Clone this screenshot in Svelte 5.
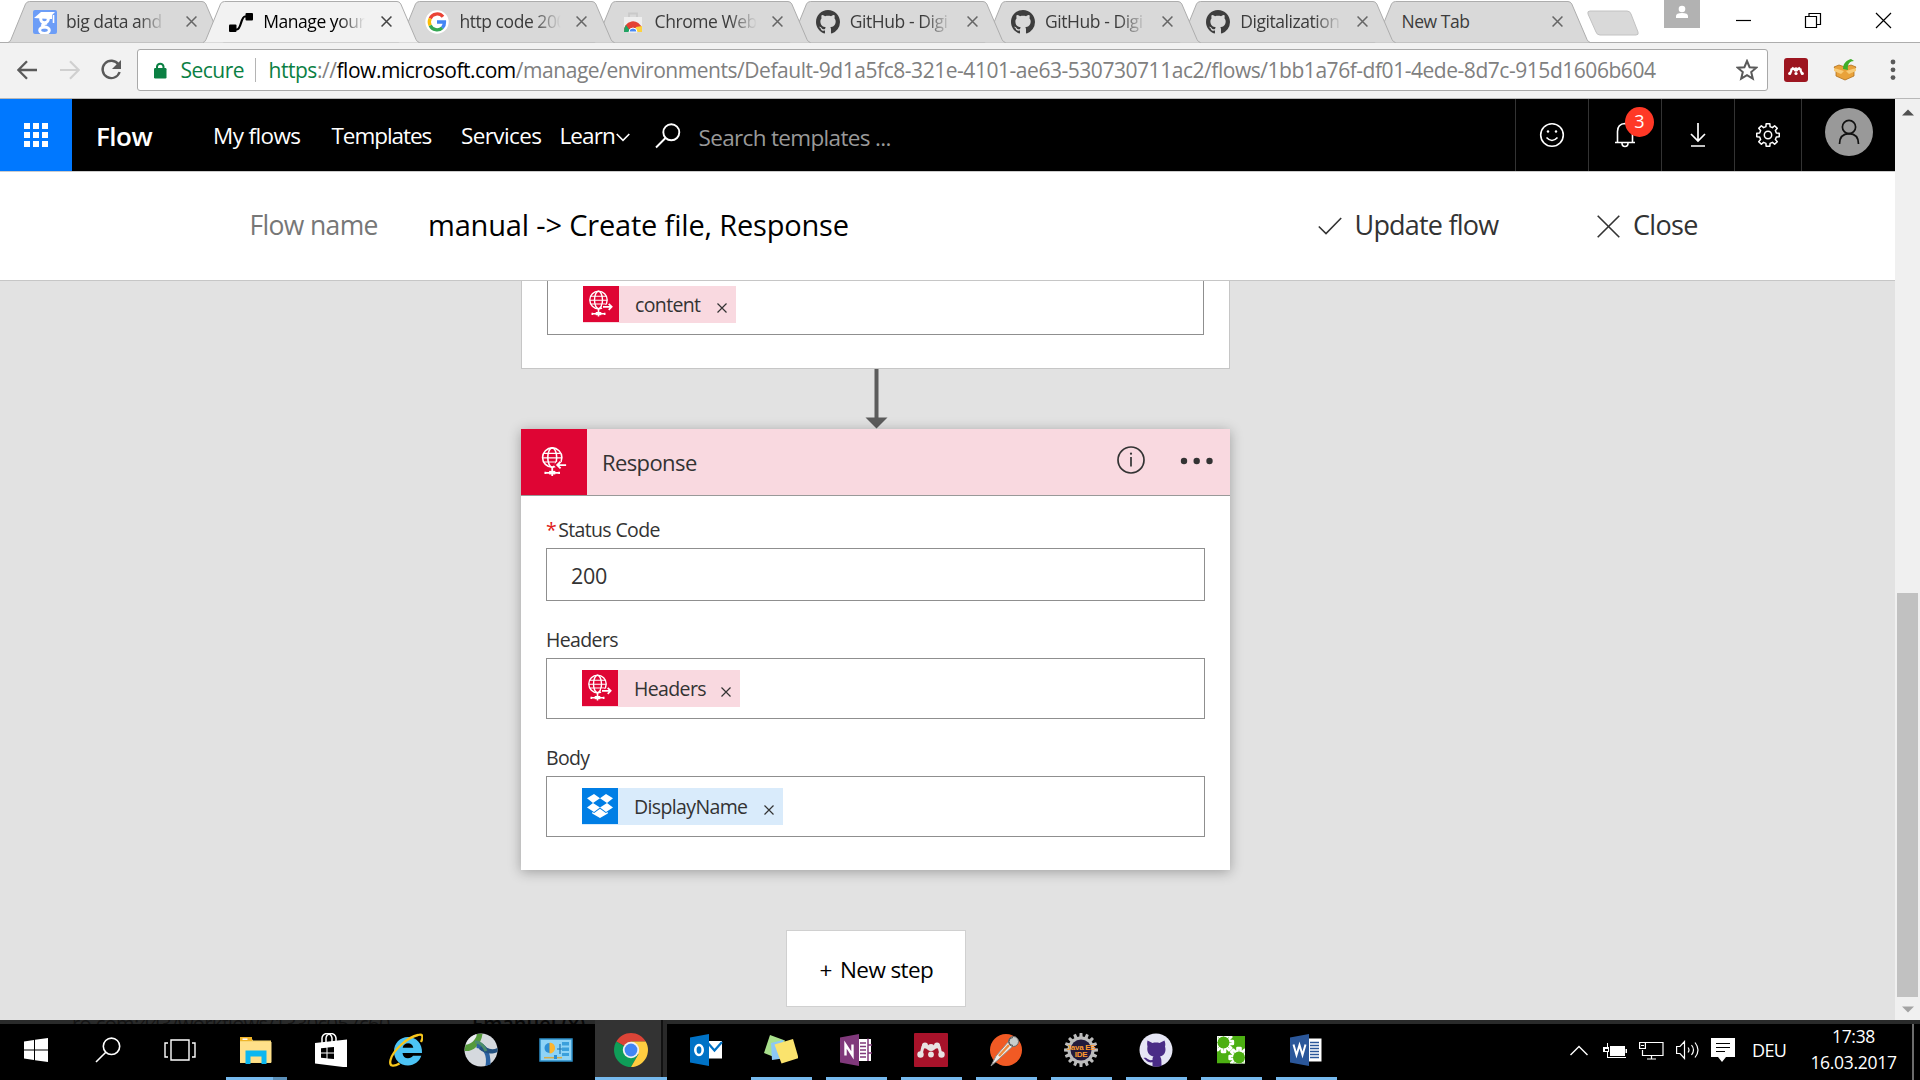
<script>
  const tabs = [
    { title: 'big data and', icon: 'scholar', w: 101 },
    { title: 'Manage your', icon: 'flow', w: 103, active: true },
    { title: 'http code 200', icon: 'google', w: 103 },
    { title: 'Chrome Web', icon: 'store', w: 103 },
    { title: 'GitHub - Digi', icon: 'github', w: 103 },
    { title: 'GitHub - Digi', icon: 'github', w: 103 },
    { title: 'Digitalization', icon: 'github', w: 103 },
    { title: 'New Tab', icon: '', w: 137 }
  ];
  const apps = ['explorer', 'winstore', 'ie', 'globe', 'panel', 'chrome', 'outlook', 'sticky', 'onenote', 'mendeley', 'postman', 'javaee', 'githubdesk', 'gears', 'word'];
  const running = ['sticky', 'onenote', 'mendeley', 'postman', 'javaee', 'githubdesk', 'gears', 'word'];
  const octo = 'M8 0C3.58 0 0 3.58 0 8c0 3.54 2.29 6.53 5.47 7.59.4.07.55-.17.55-.38 0-.19-.01-.82-.01-1.49-2.01.37-2.53-.49-2.69-.94-.09-.23-.48-.94-.82-1.13-.28-.15-.68-.52-.01-.53.63-.01 1.08.58 1.23.82.72 1.21 1.87.87 2.33.66.07-.52.28-.87.51-1.07-1.78-.2-3.64-.89-3.64-3.95 0-.87.31-1.59.82-2.15-.08-.2-.36-1.02.08-2.12 0 0 .67-.21 2.2.82.64-.18 1.32-.27 2-.27s1.36.09 2 .27c1.53-1.04 2.2-.82 2.2-.82.44 1.1.16 1.92.08 2.12.51.56.82 1.27.82 2.15 0 3.07-1.87 3.75-3.65 3.95.29.25.54.73.54 1.48 0 1.07-.01 1.93-.01 2.2 0 .21.15.46.55.38A8.01 8.01 0 0 0 16 8c0-4.42-3.58-8-8-8z';
  const gearTeeth = (n, cx, cy, r1, r2) => {
    let d = '';
    for (let i = 0; i < n; i++) {
      const a = (i / n) * Math.PI * 2 - Math.PI / 2;
      const s = Math.PI / n;
      [[-0.62, r1], [-0.42, r2], [0.42, r2], [0.62, r1]].forEach(([k, r], j) => {
        const x = cx + Math.cos(a + s * k) * r;
        const y = cy + Math.sin(a + s * k) * r;
        d += (i + j === 0 ? 'M' : 'L') + x.toFixed(2) + ' ' + y.toFixed(2);
      });
    }
    return d + 'Z';
  };
</script>

{#snippet globeIcon(size, dir)}
  <svg width={size} height={size} viewBox="0 0 36 36" fill="none" stroke="#fff" stroke-width="1.4">
    <circle cx="15.5" cy="14" r="8.7" />
    <ellipse cx="15.5" cy="14" rx="4" ry="8.7" />
    <path d="M8 10.3h15M7 14.3h17M8.2 18h14" stroke-width="1.1" />
    {#if dir === 'right'}
      <path d="M19 20.8h9.5M25.5 17.5l3.5 3.3-3.5 3.3" stroke="#df0534" stroke-width="4" />
      <path d="M20 20.8h8.5M25.7 17.8l3 3-3 3" stroke-width="1.7" />
    {:else}
      <path d="M28.5 20.8H19M23 17.5l-3.5 3.3 3.5 3.3" stroke="#df0534" stroke-width="4" />
      <path d="M28 20.8H20M23 17.8l-3 3 3 3" stroke-width="1.7" />
    {/if}
    <path d="M15.5 22.5v8M9.5 27.7h12" stroke-width="1.6" />
    <rect x="12.7" y="26" width="5.6" height="3.2" fill="#fff" stroke="none" />
    <path d="M9.3 26.7v2.2M21.7 26.7v2.2" stroke-width="1.6" />
  </svg>
{/snippet}

{#snippet chromeBall()}
  <path d="M17 17 2.3 8.5A17 17 0 0 1 31.7 8.5H17z" fill="#db4437" />
  <path d="M2.3 8.5A17 17 0 0 0 17 34l7.4-12.7L17 17z" fill="#0f9d58" />
  <path d="M31.7 8.5A17 17 0 0 1 17 34l7.4-12.7L17 8.5z" fill="#ffcd40" />
  <circle cx="17" cy="17" r="8.2" fill="#f1f1f1" />
  <circle cx="17" cy="17" r="6.4" fill="#4285f4" />
{/snippet}

{#snippet favicon(name)}
  <svg width="24" height="24" viewBox="0 0 24 24">
    {#if name === 'scholar'}
      <rect width="24" height="24" rx="2" fill="#6c9df7" />
      <path d="M1 8 8 2h14l-3 3v4h-3" fill="#fff" />
      <g fill="none" stroke="#fff" stroke-width="3">
        <circle cx="11.5" cy="9" r="3.8" />
        <path d="M14 13c-5 1-6 3-2 4" />
        <ellipse cx="11.5" cy="20.3" rx="4.8" ry="3.2" />
      </g>
      <path d="M20.5 5v8" stroke="#fff" stroke-width="1.6" />
    {:else if name === 'flow'}
      <path d="M4 19.500h4c4 0 4-13 8-13h4" fill="none" stroke="#000" stroke-width="2.2" />
      <rect x="0" y="14.500" width="7.500" height="7.500" rx="1" />
      <rect x="16.500" y="3" width="7.500" height="7.500" rx="1" />
    {:else if name === 'google'}
      <circle cx="12" cy="12" r="11.700" fill="#fff" />
      <g fill="none" stroke-width="3.300">
        <path d="M18 6.700A7.600 7.600 0 0 0 5.200 8.500" stroke="#ea4335" />
        <path d="M5.200 8.500a7.600 7.600 0 0 0 0 7" stroke="#fbbc05" />
        <path d="M5.200 15.500A7.600 7.600 0 0 0 17.300 17.800" stroke="#34a853" />
        <path d="M17.300 17.800A7.600 7.600 0 0 0 19.500 12H12" stroke="#4285f4" />
      </g>
    {:else if name === 'store'}
      <path d="M3 7h18v15H3z" fill="#eee" />
      <path d="M8 7V3.500h8V7" fill="none" stroke="#c9c9c9" stroke-width="1.800" />
      <path d="M3 22a9 9 0 0 1 18-3l-9-1z" fill="#e34133" />
      <path d="M3 22a9 9 0 0 1 2-7l5 7z" fill="#1fa463" />
      <path d="M21 16v6h-8l2-5z" fill="#fdd23e" />
      <path d="M8 22a4 4 0 0 1 8 0z" fill="#4a8af4" stroke="#fff" />
    {:else if name === 'github'}
      <path d={octo} transform="scale(1.5)" fill="#3d3d3d" />
    {/if}
  </svg>
{/snippet}

{#snippet cross(s, c, w)}
  <svg width={s} height={s} viewBox="0 0 10 10"><path d="M.5.5l9 9M9.500.5l-9 9" stroke={c} stroke-width={w} /></svg>
{/snippet}

{#snippet appIcon(name)}
  <svg width="34" height="34" viewBox="0 0 34 34">
    {#if name === 'explorer'}
      <path d="M1 4.500h11l2 3h18v22.500H1z" fill="#f8d775" />
      <path d="M1 4h12v4H1z" fill="#f0b429" />
      <path d="M3.500 6.200h5" stroke="#fff" stroke-width="1.500" />
      <path d="M1 9h31.500v20.500H1z" fill="#ffe08a" />
      <path d="M6.500 17.500h21V31h-5v-7.500H11.500V31h-5z" fill="#0cb7f0" />
    {:else if name === 'winstore'}
      <path d="M8 10V6a5 5 0 0 1 10-1v5M12 10V6a5 5 0 0 1 10-1v5" fill="none" stroke="#fff" stroke-width="1.500" />
      <path d="M1 10 33 6.500V34.500L1 30.500z" fill="#fff" />
      <path d="M7 15.200l5.500-.5v4.800H7zM13.500 14.600l6.500-.6v5.500h-6.500zM7 20.500h5.500v4.800L7 24.800zM13.500 20.500H20V26l-6.500-.6z" fill="#000" />
    {:else if name === 'ie'}
      <path fill-rule="evenodd" d="M33 20H13.500c.3 3.300 2.400 5.300 5.500 5.300 2.200 0 4-.9 5-2.500h8.300c-1.800 5.600-7 9.700-13.300 9.700C10.800 32.500 5 26.500 5 18.500S10.800 4 19 4s14.500 6.500 14 16zM13.700 14.800h10.600c-.5-2.800-2.500-4.500-5.200-4.500-2.800 0-4.900 1.700-5.400 4.500z" fill="#4cc3f5" />
      <path d="M32 9c2.500-5 2-8.500-3-7C19 4 4 17 1.500 27c-1.500 6.500 3 7 9 3.500" fill="none" stroke="#f7c61c" stroke-width="2.300" />
    {:else if name === 'globe'}
      <circle cx="17" cy="17" r="16.500" fill="#d5d9de" />
      <path d="M2 11A16.500 16.500 0 0 1 12 1.300C14 5 9 11 2 11z" fill="#e9ecef" />
      <path d="M.6 18C8 19 17 13 18.500.7L13 1C12 7 7 11 1.500 12z" fill="#559a3b" />
      <path d="M13 10c8-1 14 7 13.500 21.500l-5 1.500c2-11-2-17-9-18z" fill="#2b62a0" />
      <path d="M15 16c5 4.500 12 6 18.400 3l.1-4C27 18 22 15 19 11z" fill="#23517f" />
      <path d="M11 9c6 0 9 4 11 9" fill="none" stroke="#4b8d6a" stroke-width="3" />
    {:else if name === 'panel'}
      <rect x="1" y="6" width="32" height="22" fill="#8fd4f7" stroke="#2d8fc9" stroke-width="1.500" />
      <circle cx="10.500" cy="15" r="5" fill="#2d8fd5" />
      <path d="M10.500 15V9.500a5.500 5.500 0 0 1 0 11z" fill="#ffb52e" />
      <path d="M18 16h5M21 11v10" stroke="#1f77b5" stroke-width="1.200" fill="none" />
      <path d="M23 9h7v3.500h-7zM23 14.500h7V18h-7zM23 20h7v3h-7z" fill="#3ba0dc" />
      <path d="M5 24.700h18" stroke="#d6ac4b" stroke-width="1.500" />
      <path d="M15 22h3v4h-3z" fill="#2d8fd5" />
    {:else if name === 'chrome'}
      {@render chromeBall()}
    {:else if name === 'outlook'}
      <path d="M16 8h17v17.500H16z" fill="#fff" />
      <path d="M18 9l7.500 8.500L33 9" fill="none" stroke="#0072c6" stroke-width="2.200" />
      <path d="M1 4.500 20 1v32L1 29.500z" fill="#0072c6" />
      <ellipse cx="10" cy="17" rx="3.700" ry="5" fill="none" stroke="#fff" stroke-width="2.600" />
    {:else if name === 'sticky'}
      <path d="M6 2 21 7.500 15 26 0 20z" fill="#a9e08c" />
      <path d="M7 10 19 7l3 18-14 2z" fill="#8cc8f5" />
      <path d="M10.500 11.500 29 6l5.500 19-17 5.500z" fill="#fbe36d" />
    {:else if name === 'onenote'}
      <path d="M18 6h14v22H18z" fill="#fff" />
      <path d="M21 10h6M21 13.500h6M21 17h6M21 20.500h6M21 24h6" stroke="#80397b" stroke-width="1.300" />
      <path d="M29 5.500V28M29 12h4M29 20h4" stroke="#80397b" stroke-width="1.500" />
      <path d="M1 4.500 20 1v32L1 29.500z" fill="#80397b" />
      <path d="M6.500 22.500v-11l7 11v-11" fill="none" stroke="#fff" stroke-width="2.400" />
    {:else if name === 'mendeley'}
      <rect width="34" height="34" rx="1" fill="#a8122a" />
      <path d="M6.500 21c2.500-2 1-9 4.500-9.500M27.500 21c-2.500-2-1-9-4.500-9.500M11 12q6 8 12 0" fill="none" stroke="#e8e2e2" stroke-width="3" />
      <g fill="#e8e2e2"><circle cx="11" cy="12.500" r="3" /><circle cx="23" cy="12.500" r="3" /><circle cx="17" cy="14.500" r="3.600" /><circle cx="6.500" cy="21.500" r="3.200" /><circle cx="17" cy="21.500" r="2.900" /><circle cx="27.500" cy="21.500" r="3.200" /></g>
    {:else if name === 'postman'}
      <circle cx="17" cy="17" r="16" fill="#f15a24" />
      <path d="M25 12 10 26l-8 7 5-10L20 8z" fill="#f3ede8" stroke="#8d8d8d" />
      <path d="M20 12 10 23" stroke="#f08a3c" stroke-width="2.500" />
      <circle cx="24.500" cy="8.500" r="5" fill="#c8cccb" stroke="#666" />
      <path d="M24 4.500a4 4 0 0 0 0 8" fill="none" stroke="#555" />
    {:else if name === 'javaee'}
      <path d={gearTeeth(16, 17, 17, 13.5, 17)} fill="#bcbcbc" />
      <circle cx="17" cy="17" r="10.500" fill="#231a3c" />
      <text x="17" y="16.500" text-anchor="middle" class="java">Java EE</text>
      <text x="17" y="24" text-anchor="middle" class="java">IDE</text>
    {:else if name === 'githubdesk'}
      <circle cx="17" cy="17" r="16.500" fill="#e6e6f5" />
      <path d="M8.500 7.500l5 2.500c2-.6 5-.6 7 0l5-2.500c1 3 1 4 .5 6 1.500 5-.5 9-5 10 1.500 2 1.500 3 1.500 9.500-3 1-7 1-9 .3v-4c-5 .7-6-2-9-4.300 4-1 4 3 9 2 0-2 0-2.500 1-3.500-5-1-7-5-6-10-.5-2-.5-3.500 0-6z" fill="#4a2c87" />
    {:else if name === 'gears'}
      <clipPath id="gearbox"><rect x="3" y="3" width="28" height="27.500" /></clipPath>
      <g clip-path="url(#gearbox)" fill="#4caf12" stroke="#fff" stroke-width="2.600" stroke-linejoin="round">
        <rect x="3" y="3" width="28" height="27.500" stroke="none" />
        <path d={gearTeeth(8, 9.5, 9.5, 6, 9.5)} />
        <path d={gearTeeth(8, 25, 24.5, 6, 9.5)} />
        <circle cx="9.500" cy="9.500" r="6" stroke="none" /><circle cx="25" cy="24.500" r="6" stroke="none" />
      </g>
    {:else if name === 'word'}
      <path d="M18 5.500h14.500v23H18z" fill="#fff" />
      <path d="M21 9.500h9M21 12.500h9M21 15.500h9M21 18.500h9M21 21.500h9M21 24.500h9" stroke="#2b579a" stroke-width="1.300" />
      <path d="M1 4.500 20 1v32L1 29.500z" fill="#2b579a" />
      <path d="M4.500 11.500l3 10.500 3-10 3 10 3-10.500" fill="none" stroke="#fff" stroke-width="2" />
    {/if}
  </svg>
{/snippet}

<div class="screen">
  <div class="tabstrip">
    <div class="tabs">
      {#each tabs as t, i}
        <div class="tab z{i}" class:active={t.active}>
          <svg class="shape" width="217" height="43" viewBox="0 0 217 43">
            <path d="M0 42.500 Q2 42 3 39.500L17.500 4Q18.800 1.500 21.500 1.500H194Q196.500 1.500 197.800 4L213 39.500Q214 42 216.500 42.500" fill={t.active ? '#f2f2f2' : '#d9d9d9'} stroke="#adadad" />
          </svg>
          <div class="tabbody" class:plain={!t.icon}>
            {#if t.icon}<span class="fav">{@render favicon(t.icon)}</span>{/if}
            <span class="title" class:fade={t.icon} style:width="{t.w}px">{t.title}</span>
            <span class="tx">{@render cross(11, t.active ? '#444' : '#666', 1.4)}</span>
          </div>
        </div>
      {/each}
    </div>
    <svg class="newtab" width="54" height="27" viewBox="0 0 54 27"><path d="M4 1h37q3 0 4 3l7 18q1 3-2 3H14q-3 0-4-3L2 4Q1 1 4 1z" fill="#d9d9d9" stroke="#c2c2c2" /></svg>
    <div class="profile"><svg width="36" height="28" viewBox="0 0 36 28"><circle cx="18" cy="9" r="3.300" fill="#fff" /><path d="M12 18v-2q0-3 6-3t6 3v2z" fill="#fff" /></svg></div>
    <svg class="winctl" width="160" height="20" viewBox="0 0 160 20" fill="none" stroke="#000" stroke-width="1.200">
      <path d="M0 10.500h15" />
      <path d="M69.500 6.500h11v11h-11zM73 6.500V3.500h11.500v11H81" />
      <path d="M140 3l15 15M155 3l-15 15" />
    </svg>
  </div>

  <div class="toolbar">
    <svg width="21" height="20" viewBox="0 0 21 20" class="back"><path d="M20 10H1.500M10 1.300 1.300 10l8.700 8.700" fill="none" stroke="#5a5a5a" stroke-width="2.300" /></svg>
    <svg width="20" height="20" viewBox="0 0 20 20" class="fwd"><path d="M0 10h18.500M10 1.300l8.700 8.700-8.700 8.700" fill="none" stroke="#d0d0d0" stroke-width="2.200" /></svg>
    <svg width="22" height="22" viewBox="0 0 22 22" class="reload"><path d="M18.500 5.500A8.700 8.700 0 1 0 19.600 13" fill="none" stroke="#5a5a5a" stroke-width="2.400" /><path d="M21 1v9h-9z" fill="#5a5a5a" /></svg>
    <div class="omni">
      <svg width="13" height="17" viewBox="0 0 13 17" class="lock"><rect x="0" y="6" width="12.500" height="10.500" rx="1.200" fill="#0b8043" /><path d="M3 7V4.500a3.300 3.300 0 0 1 6.500 0V7" fill="none" stroke="#0b8043" stroke-width="2" /></svg>
      <span class="secure">Secure</span>
      <span class="bar"></span>
      <span class="url"><span class="g">https</span>://<span class="k">flow.microsoft.com</span>/manage/environments/Default-9d1a5fc8-321e-4101-ae63-530730711ac2/flows/1bb1a76f-df01-4ede-8d7c-915d1606b604</span>
      <svg width="22" height="22" viewBox="0 0 22 22" class="star"><path d="M11 2l2.600 6.200 6.700.5-5.100 4.400 1.600 6.500L11 16.100l-5.800 3.500 1.600-6.500L1.700 8.700l6.700-.5z" fill="none" stroke="#5a5a5a" stroke-width="2" /></svg>
    </div>
    <svg width="24" height="24" viewBox="0 0 24 24" class="ext1"><rect width="24" height="24" rx="3" fill="#9d1620" /><path d="M5.500 15.500q2-1 2-5M18.500 15.500q-2-1-2-5M8 9.500q4 5 8 0" fill="none" stroke="#fff" stroke-width="2.200" /><circle cx="12" cy="11.500" r="2.200" fill="#fff" /><circle cx="12" cy="15.500" r="1.600" fill="#fff" /><circle cx="5.700" cy="15.500" r="1.600" fill="#fff" /><circle cx="18.300" cy="15.500" r="1.600" fill="#fff" /></svg>
    <svg width="24" height="22" viewBox="0 0 24 22" class="ext2"><path d="M1 8l5-2 6 2 6-2 5 2-2 3v6l-9 4-9-4v-6z" fill="#e9a23b" stroke="#b06f1c" stroke-width=".8" /><path d="M1 9l10 3-3 3-7-3zM23 9l-10 3 3 3 7-3z" fill="#f8cb77" /><path d="M10 10c0-6 4-9 8-10l3 2c-4 0-7 3-6 9z" fill="#3fae2a" /></svg>
    <svg width="6" height="22" viewBox="0 0 6 22"><circle cx="3" cy="3" r="2.400" fill="#5a5a5a" /><circle cx="3" cy="10.800" r="2.400" fill="#5a5a5a" /><circle cx="3" cy="18.600" r="2.400" fill="#5a5a5a" /></svg>
  </div>

  <div class="view">
    <div class="page">
      <header>
        <div class="waffle"><svg width="24" height="24" viewBox="0 0 24 24" fill="#fff">{#each [0, 9, 18] as y}{#each [0, 9, 18] as x}<rect {x} {y} width="6" height="6" />{/each}{/each}</svg></div>
        <span class="brand">Flow</span>
        <span class="nav n1">My flows</span>
        <span class="nav n2">Templates</span>
        <span class="nav n3">Services</span>
        <span class="nav n4">Learn</span>
        <svg class="chev" width="14" height="9" viewBox="0 0 14 9"><path d="M.7 1l6.300 6.300L13.300 1" fill="none" stroke="#fff" stroke-width="1.600" /></svg>
        <svg class="find" width="26" height="26" viewBox="0 0 26 26" fill="none" stroke="#fff" stroke-width="1.900"><circle cx="16.300" cy="9.300" r="8" /><path d="M10.500 15 1 24.500" /></svg>
        <span class="search">Search templates ...</span>
        <div class="hic w73"><svg width="26" height="26" viewBox="0 0 26 26" fill="none" stroke="#fff" stroke-width="1.600"><circle cx="13" cy="13" r="11.300" /><path d="M7.500 15.500q5.500 6 11 0" /><circle cx="9" cy="9.500" r="1.200" fill="#fff" stroke="none" /><circle cx="17" cy="9.500" r="1.200" fill="#fff" stroke="none" /></svg></div>
        <div class="hic w73 bell"><svg width="22" height="26" viewBox="0 0 22 26" fill="none" stroke="#fff" stroke-width="1.600"><path d="M1 20.500h20M3.500 20.500V9.500q0-7.500 7.500-8 7.500.5 7.500 8v11" /><path d="M8 21q0 3.500 3 3.500t3-3.500" /></svg><span class="badge">3</span></div>
        <div class="hic w73"><svg width="18" height="26" viewBox="0 0 18 26" fill="none" stroke="#fff" stroke-width="1.700"><path d="M9 1v18M2 12l7 7 7-7M2 24h14" /></svg></div>
        <div class="hic w67"><svg width="26" height="26" viewBox="0 0 26 26" fill="none" stroke="#fff" stroke-width="1.500" stroke-linejoin="round"><path d={gearTeeth(8, 13, 13, 8.6, 11.4)} /><circle cx="13" cy="13" r="3.700" /></svg></div>
        <div class="hic av"><svg width="48" height="48" viewBox="0 0 48 48" fill="none" stroke="#111" stroke-width="1.700"><circle cx="24" cy="24" r="24" fill="#999" stroke="none" /><circle cx="24" cy="19" r="6.600" /><path d="M14.500 36q0-10 9.500-10.300 9.500.3 9.500 10.300" /></svg></div>
      </header>

      <div class="namebar">
        <span class="lbl">Flow name</span>
        <span class="fname">manual -&gt; Create file, Response</span>
        <svg class="check" width="24" height="18" viewBox="0 0 24 18"><path d="M.8 9.500l7.200 7L23.200 1" fill="none" stroke="#333" stroke-width="1.600" /></svg>
        <span class="upd">Update flow</span>
        <svg class="bigx" width="23" height="23" viewBox="0 0 23 23"><path d="M.7.7l21.600 21.600M22.300.7.7 22.300" stroke="#333" stroke-width="1.600" /></svg>
        <span class="cls">Close</span>
      </div>

      <main>
        <section class="upper">
          <div class="field top">
            <span class="chip c1"><i>{@render globeIcon(36, 'right')}</i><b>content</b><em>{@render cross(10, '#333', 1.2)}</em></span>
          </div>
        </section>
        <svg class="arrow" width="24" height="60" viewBox="0 0 24 60"><path d="M12.500 0v50" stroke="#5c5c5c" stroke-width="4" /><path d="M1.500 48.500h22L12.500 59.500z" fill="#5c5c5c" /></svg>
        <section class="card">
          <div class="cardhead">
            <i>{@render globeIcon(40, 'left')}</i>
            <span class="ctitle">Response</span>
            <svg width="30" height="30" viewBox="0 0 30 30" fill="none" stroke="#333" stroke-width="1.700"><circle cx="15" cy="15" r="13" /><path d="M15 12v9.500" /><circle cx="15" cy="8.700" r="1.100" fill="#333" stroke="none" /></svg>
            <svg class="dots" width="34" height="8" viewBox="0 0 34 8" fill="#333"><circle cx="4" cy="4" r="3.200" /><circle cx="16.700" cy="4" r="3.200" /><circle cx="29.500" cy="4" r="3.200" /></svg>
          </div>
          <div class="label first"><u>*</u>Status Code</div>
          <div class="field input">200</div>
          <div class="label w">Headers</div>
          <div class="field"><span class="chip c2"><i>{@render globeIcon(36, 'right')}</i><b>Headers</b><em>{@render cross(10, '#333', 1.2)}</em></span></div>
          <div class="label w">Body</div>
          <div class="field">
            <span class="chip c3"><i><svg width="36" height="36" viewBox="0 0 36 36" fill="#fff"><path d="M12 6l6 4.300-7 4.600-6-4.700zM24 6l7 4.200-6 4.700-7-4.600zM5 19.400l6-4.500 7 4.600-6 4.500zM25 14.900l6 4.500-7 4.600-6-4.500zM18 20.800l5.800 4.300 2-1.200v1.700L18 30l-7.800-4.400v-1.700l2 1.200z" /></svg></i><b>DisplayName</b><em>{@render cross(10, '#333', 1.2)}</em></span>
          </div>
        </section>
        <div class="newstep"><span class="plus">+</span><span>New step</span></div>
      </main>
    </div>
    <div class="scroll">
      <svg width="12" height="7" viewBox="0 0 12 7"><path d="M0 6.500 6 .5l6 6z" fill="#505050" /></svg>
      <div class="thumb"></div>
      <svg width="12" height="7" viewBox="0 0 12 7"><path d="M0 .5 6 6.500l6-6z" fill="#a3a3a3" /></svg>
    </div>
  </div>

  <footer>
    <div class="strip" aria-hidden="true"><span class="gh1">ro.com:443/workflows/1330c057c60</span><span class="gh2">Emanuel (x)</span></div>
    <div class="cell s"><svg width="24" height="24" viewBox="0 0 24 24" fill="#fff"><path d="M0 3.500 10 2v9.500H0zM11 1.800 24 0v11.500H11zM0 12.500h10V22L0 20.500zM11 12.500h13V24l-13-1.800z" /></svg></div>
    <div class="cell s"><svg width="26" height="26" viewBox="0 0 26 26" fill="none" stroke="#fff" stroke-width="1.600"><circle cx="16.500" cy="9.300" r="8.200" /><path d="M10.800 15.200 1 25" /></svg></div>
    <div class="cell s"><svg width="32" height="22" viewBox="0 0 32 22" fill="none" stroke="#fff" stroke-width="1.400"><path d="M7 1h18v20H7zM4 4H1v14h3M28 4h3v14h-3" /></svg></div>
    <div class="apps">
      {#each apps as a}
        <div class="cell app {a}" class:run={running.includes(a)}>{@render appIcon(a)}</div>
      {/each}
    </div>
    <div class="tray">
      <svg class="t1" width="18" height="11" viewBox="0 0 18 11"><path d="M.5 10 9 1.500 17.500 10" fill="none" stroke="#fff" stroke-width="1.400" /></svg>
      <svg class="t2" width="25" height="17" viewBox="0 0 25 17" fill="#fff"><path d="M7 4h15v10H7zM22.500 7H24v4h-1.500zM4 15h19v1H4zM0 5h6v5H0zM4 1h1v14H4z" /><path d="M2 7h3v2H2z" fill="#000" /></svg>
      <svg class="t3" width="25" height="19" viewBox="0 0 25 19" fill="none" stroke="#fff" stroke-width="1.200"><path d="M7 1.500h17v13H3.500V9M12.500 14.500V18M8 18h9M.6 1.500h5.800v6H.6zM2 4.500h3" /></svg>
      <svg class="t4" width="23" height="20" viewBox="0 0 23 20" fill="none" stroke="#fff" stroke-width="1.200"><path d="M.6 6.500H4L8.500 1.500v17L4 13.500H.6zM12 7.500q2 2.500 0 5M15.500 5q4 5 0 10M19 2.500q6 7.500 0 15" /></svg>
      <svg class="t5" width="24" height="24" viewBox="0 0 24 24"><path d="M0 0h24v19h-9l-4 5-4-5H0z" fill="#fff" /><path d="M5 5.500h14M5 9.500h14M5 13.500h9" stroke="#000" stroke-width="1.200" /></svg>
      <span class="lang">DEU</span>
      <span class="clock"><span class="hm">17:38</span><span class="dt">16.03.2017</span></span>
    </div>
    <span class="edge"></span>
  </footer>
</div>

<style>
  :global(body) { margin: 0; background: #fff; }
  .screen, .screen * { box-sizing: border-box; }
  .screen {
    width: 1920px; height: 1080px; overflow: hidden; display: flex; flex-direction: column;
    font-family: "Segoe UI", "Open Sans", "Noto Sans", sans-serif; color: #333; white-space: nowrap;
  }
  svg { display: block; flex: none; }

  .tabstrip { height: 43px; display: flex; align-items: flex-start; padding-left: 8px; background: linear-gradient(#fff 42px, #adadad 42px); }
  .tabs { display: flex; width: 1578px; flex: none; }
  .tab { position: relative; width: 217px; height: 43px; margin-right: -21.800px; flex: none; }
  .shape { position: absolute; left: 0; top: 0; }
  .z0 { z-index: 8; } .z1 { z-index: 7; } .z2 { z-index: 6; } .z3 { z-index: 5; } .z4 { z-index: 4; } .z5 { z-index: 3; } .z6 { z-index: 2; } .z7 { z-index: 1; }
  .tab.active { z-index: 9; }
  .tabbody { position: relative; display: flex; align-items: center; height: 43px; padding-left: 27px; }
  .z0 .tabbody { padding-left: 25px; }
  .fav { width: 34px; }
  .z0 .fav { width: 33px; }
  .title { overflow: hidden; font-size: 17.500px; letter-spacing: -.45px; color: #3c3c3c; margin-right: 14px; line-height: 40px; padding-bottom: 2px; flex: none; }
  .z0 .title { margin-right: 19px; }
  .z7 .title { margin-right: 14px; }
  .active .title { color: #000; margin-right: 15px; }
  .active .tabbody { padding-left: 26px; }
  .fade { -webkit-mask-image: linear-gradient(90deg, #000 72%, transparent 99%); mask-image: linear-gradient(90deg, #000 72%, transparent 99%); }
  .newtab { margin-top: 10px; }
  .profile { width: 36px; height: 28px; margin-left: 24px; background: #b2b2b2; }
  .winctl { margin: 10px 0 0 36px; }

  .toolbar { height: 56px; display: flex; align-items: center; padding: 0 0 1px 16.500px; background: #f2f2f2; border-bottom: 1px solid #b8b8b8; }
  .fwd { margin-left: 22px; }
  .reload { margin-left: 20.500px; }
  .omni { display: flex; align-items: center; width: 1631px; height: 42px; margin-left: 15px; padding-left: 16px; background: #fff; border: 1px solid #a9a9a9; border-radius: 3px; flex: none; }
  .secure { box-sizing: content-box; width: 61px; padding-left: 13.500px; color: #0b8043; font-size: 21px; letter-spacing: -.5px; line-height: 40px; }
  .bar { width: 1px; height: 24px; margin-left: 13.500px; background: #b4b4b4; }
  .url { flex: 1; padding-left: 12.500px; font-size: 21px; letter-spacing: -.46px; line-height: 40px; color: #808080; }
  .g { color: #0b8043; } .k { color: #000; }
  .star { margin-right: 9px; }
  .ext1 { margin-left: 16px; }
  .ext2 { margin: 0 33px 0 25px; }

  .view { height: 921px; display: flex; }
  .page { width: 1895px; flex: none; display: flex; flex-direction: column; }
  header { height: 72px; display: flex; align-items: center; background: #000; color: #fff; flex: none; }
  .waffle { width: 72px; height: 72px; display: grid; place-items: center; background: #0078ff; }
  .brand { width: 117px; margin-left: 24px; padding-top: 2px; font-size: 26px; font-weight: 600; letter-spacing: -.5px; }
  .nav { font-size: 22.500px; letter-spacing: -.6px; }
  .n1 { width: 118.500px; } .n2 { width: 129.500px; letter-spacing: -1.050px; } .n3 { width: 98.500px; } .n4 { width: 56px; letter-spacing: -.9px; }
  .chev { margin-top: 5px; }
  .find { margin: 2px 0 0 25px; }
  .search { flex: 1; padding: 5px 0 0 18px; font-size: 22.500px; letter-spacing: -.66px; color: #999; }
  .hic { position: relative; height: 72px; display: grid; place-items: center; border-left: 1px solid #333; flex: none; }
  .w73 { width: 73px; } .w67 { width: 67px; }
  .av { width: 94px; padding-bottom: 6px; }
  .badge { position: absolute; left: 36px; top: 8px; width: 29px; height: 30px; border-radius: 50%; background: #ff3826; font-size: 18px; line-height: 29px; text-align: center; }

  .namebar { height: 110px; display: flex; align-items: center; padding-left: 249.500px; background: #fff; border-top: 1px solid #ccc; border-bottom: 1px solid #c6c6c6; flex: none; }
  .namebar span { padding-bottom: 2.500px; }
  .lbl { width: 178.500px; font-size: 26.500px; letter-spacing: -.65px; color: #777; }
  .fname { width: 890px; font-size: 29px; letter-spacing: -.18px; color: #000; }
  .upd { width: 255px; padding-left: 12.500px; font-size: 27px; letter-spacing: -.8px; }
  .cls { padding-left: 13px; font-size: 27px; letter-spacing: -.7px; }

  main { height: 739px; overflow: hidden; display: flex; flex-direction: column; background: #e2e2e2; padding-left: 521px; }
  .upper { width: 709px; height: 88px; flex: none; padding: 0 25px; background: #fff; border: 1px solid #c6c6c6; border-top: 0; }
  .field { width: 659px; height: 61px; margin-left: 25px; padding: 11px 0 0 35px; background: #fff; border: 1px solid #8f8f8f; flex: none; }
  .field.top { width: 657px; height: 54px; margin: 0; padding-top: 5px; border-top: 0; }
  .chip { display: inline-flex; height: 37px; vertical-align: top; background: #f9d9e0; }
  .chip i { width: 36px; height: 36px; background: #df0534; }
  .chip b { flex: 1; padding-left: 16px; font-weight: 400; font-size: 19.500px; letter-spacing: -.63px; line-height: 38px; }
  .chip em { width: 19px; padding-top: 17px; }
  .c1 { width: 153px; } .c2 { width: 158px; } .c3 { width: 201px; }
  .c3 { background: #d9ebfb; }
  .c3 i { background: #007ee5; }
  .arrow { margin-left: 343px; }
  .card { width: 709px; height: 441px; flex: none; background: #fff; box-shadow: 0 2px 12px rgba(0, 0, 0, .3); }
  .cardhead { display: flex; align-items: center; height: 67px; background: #f9d9e0; border-bottom: 1px solid #999; }
  .cardhead i { width: 66px; height: 66px; display: grid; place-items: center; padding-left: 1px; background: #df0534; }
  .ctitle { width: 513.500px; padding: 0 0 0 15px; font-size: 22px; letter-spacing: -.6px; }
  .cardhead svg:not(i svg) { margin: 0 0 5px 15.500px; }
  .cardhead .dots.dots { margin-left: 34px; margin-bottom: 2px; }
  .label { height: 39px; margin: 18px 0 0 25px; font-size: 19.500px; letter-spacing: -.63px; line-height: 41px; }
  .label.first { margin-top: 13px; }
  .label u { text-decoration: none; color: #e02020; margin-right: 2px; }
  .input { height: 53px; padding: 0 0 0 24px; font-size: 21.500px; letter-spacing: -.3px; line-height: 53px; }
  .newstep { width: 180px; height: 77px; margin: 60px 0 0 265px; flex: none; display: flex; padding: 1px 0 0 32.500px; align-items: center; background: #fff; border: 1px solid #d0d0d0; color: #000; font-size: 22.500px; letter-spacing: -.6px; }
  .plus { width: 20.500px; }

  .scroll { width: 25px; display: flex; flex-direction: column; align-items: center; background: #f0f0f0; padding: 10px 0 0; }
  .thumb { width: 21px; height: 404px; margin: 477px 0 9px; background: #c1c1c1; flex: none; }

  footer { position: relative; height: 60px; display: flex; background: #000; color: #fff; }
  .strip { position: absolute; left: 0; top: 0; width: 1920px; height: 4px; overflow: hidden; display: flex; background: #292a2a; color: #151515; font-size: 20px; line-height: 8px; }
  .gh1 { width: 400px; padding-left: 72px; letter-spacing: -.6px; } .gh2 { padding-left: 72px; font-weight: 600; color: #080808; }
  .cell { height: 60px; display: grid; place-items: center; flex: none; }
  .s { width: 72px; }
  .apps { display: flex; padding-left: 2.500px; }
  .app { position: relative; width: 75px; }
  .run::after, .explorer::after { content: ""; position: absolute; left: 7px; bottom: 0; width: 61px; height: 3px; background: #76b9ed; }
  .explorer::after { background: linear-gradient(90deg, #76b9ed 47px, #5b8fb8 47px); }
  .chrome { background: linear-gradient(90deg, #333 66px, #111 66px, #111 68px, #292929 68px); margin: 0 1.500px 0 1.500px; width: 72px; border-bottom: 3px solid #76b9ed; padding-top: 3px; }
  .java { font: 700 8px "Liberation Sans", sans-serif; fill: #ff9a2e; letter-spacing: -.3px; }
  .tray { display: flex; align-items: center; margin-left: auto; width: 342px; flex: none; }
  .t2 { margin-left: 15px; } .t3 { margin-left: 11px; } .t4 { margin-left: 12px; } .t5 { margin-left: 12px; }
  .lang { width: 59px; margin-left: 17px; font-size: 18px; letter-spacing: -.6px; }
  .clock { display: flex; flex-direction: column; width: 85px; align-items: center; font-size: 17.500px; line-height: 26px; letter-spacing: -.3px; padding-bottom: 2px; }
  .edge { width: 2px; margin-right: 6px; background: #6b6b6b; }
</style>
